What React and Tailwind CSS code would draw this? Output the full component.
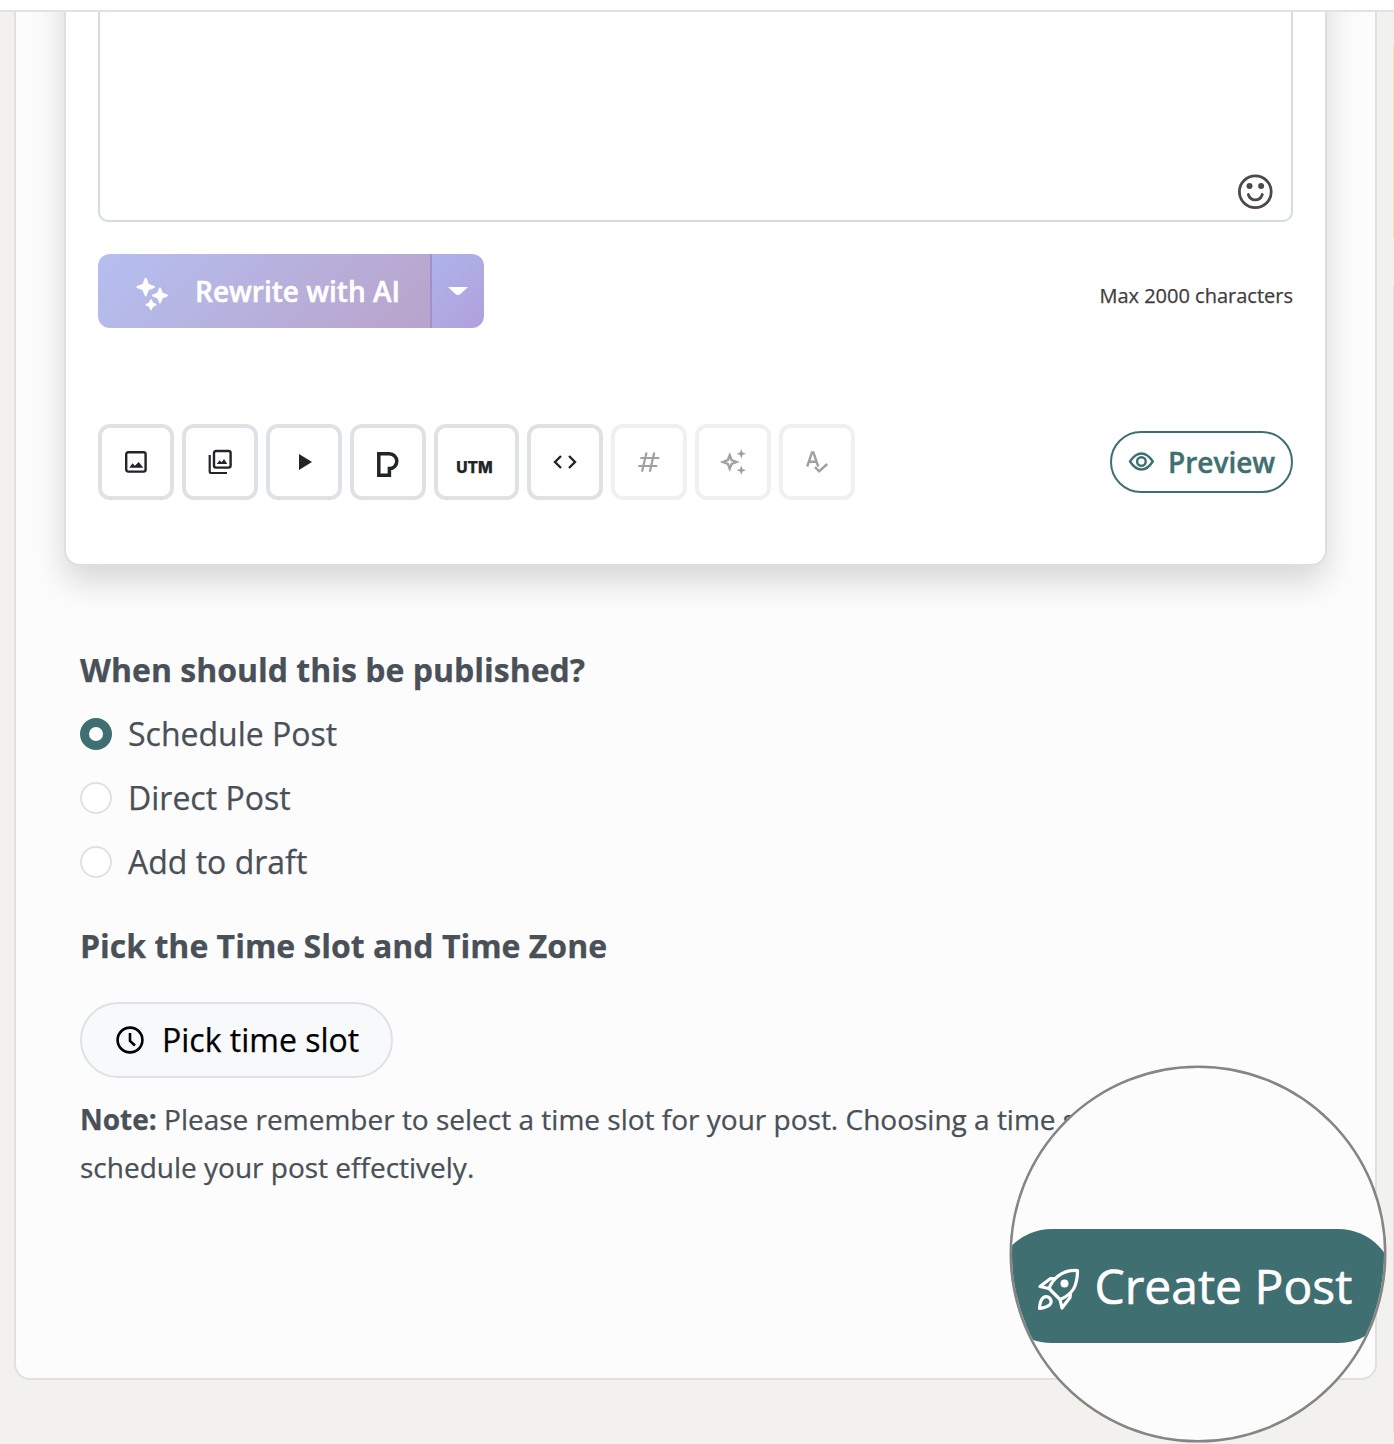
import { useState } from 'react'

const star = (cx, cy, r) => {
  const k = r * 0.28
  return `M${cx} ${cy - r}L${cx + k} ${cy - k}L${cx + r} ${cy}L${cx + k} ${cy + k}L${cx} ${cy + r}L${cx - k} ${cy + k}L${cx - r} ${cy}L${cx - k} ${cy - k}Z`
}

function Icon({ size = 24, children, className = '' }) {
  return (
    <svg
      width={size}
      height={size}
      viewBox={`0 0 ${size} ${size}`}
      fill="none"
      stroke="currentColor"
      strokeWidth="2.2"
      className={`shrink-0 overflow-visible ${className}`}
    >
      {children}
    </svg>
  )
}

const tools = [
  {
    name: 'Image',
    icon: (
      <Icon>
        <rect x="2.2" y="2.2" width="19.4" height="19.4" rx="2" strokeWidth="2.4" />
        <path d="M5.3 17.8l3.2-4.6 2.4 2.6L14.7 12l4.6 5.8z" fill="currentColor" stroke="none" />
      </Icon>
    ),
  },
  {
    name: 'Gallery',
    icon: (
      <Icon>
        <rect x="6" y="1" width="16.6" height="16.6" rx="2" strokeWidth="2.4" />
        <path d="M8.7 14l3-3.8 2 2L16 9l3.3 5z" fill="currentColor" stroke="none" />
        <path d="M1.7 5v17q0 1 1 1h16.3" />
      </Icon>
    ),
  },
  {
    name: 'Video',
    icon: (
      <Icon>
        <path d="M7 4l13 8-13 8z" fill="currentColor" stroke="none" />
      </Icon>
    ),
  },
  {
    name: 'Pixel',
    icon: (
      <Icon>
        <path d="M2.8 3.8h10.6a7.4 7.4 0 0 1 0 14.8v6.6H2.8z" strokeWidth="3.5" />
      </Icon>
    ),
  },
  { name: 'UTM', text: true },
  {
    name: 'Code',
    icon: (
      <Icon>
        <path d="M8 6l-6 6 6 6M16 6l6 6-6 6" strokeWidth="2.4" />
      </Icon>
    ),
  },
  {
    name: 'Hashtags',
    disabled: true,
    icon: (
      <Icon>
        <path d="M3.3 8h19M1.3 16h19M9.5 2.5L5 21.7M17.3 2.5L12.8 21.7" />
      </Icon>
    ),
  },
  {
    name: 'Generate',
    disabled: true,
    icon: (
      <Icon>
        <path d={star(8.7, 12, 6.8)} strokeWidth="2.4" />
        <path d={`${star(20.3, 3.7, 4.7)}${star(20.3, 20.3, 4.7)}`} fill="currentColor" stroke="none" />
      </Icon>
    ),
  },
  {
    name: 'Spelling',
    disabled: true,
    icon: (
      <Icon>
        <path d="M2.2 16.5L7 2.4h1.4L13.2 16.5M4 11.8h7.6M10 17.2l4.2 4.2 8-7.4" strokeWidth="2.4" />
      </Icon>
    ),
  },
]

function ToolButton({ tool }) {
  return (
    <button
      aria-label={tool.name}
      disabled={tool.disabled}
      className={`flex h-[76px] items-center justify-center rounded-xl border-4 ${tool.text ? 'w-[85px]' : 'w-[76px]'} ${tool.disabled ? 'border-[#eff0f2] text-[#a0a0a0]' : 'border-[#dee2e6] text-[#212529]'}`}
    >
      {tool.text ? (
        <span className="pt-[11px] pr-1 font-['Inter',sans-serif] text-[15.5px] leading-none font-extrabold">UTM</span>
      ) : (
        tool.icon
      )}
    </button>
  )
}

function Editor() {
  return (
    <div className="-mt-20 h-[634px] w-[1263px] shrink-0 rounded-2xl border-2 border-[#dfdfdf] bg-white px-8 shadow-[0_16px_32px_rgba(0,0,0,0.15)]">
      <div className="flex h-[288px] items-end justify-end rounded-[10px] border-2 border-[#d5dbe5] pr-[18px] pb-[10px]">
        <Icon size={36} className="text-[#4a4a4a]">
          <circle cx="18.3" cy="17.7" r="15.9" strokeWidth="2.8" />
          <circle cx="12.5" cy="12" r="3" fill="currentColor" stroke="none" />
          <circle cx="24.1" cy="12" r="3" fill="currentColor" stroke="none" />
          <path d="M11.3 20.5c1.2 3.8 3.8 5.4 7 5.4s5.8-1.6 7-5.4" strokeWidth="2.8" strokeLinecap="round" />
        </Icon>
      </div>

      <div className="mt-8 flex items-start justify-between">
        <div className="flex h-[74px] overflow-hidden rounded-xl text-white">
          <button className="flex w-[332px] items-center bg-linear-135 from-[#b4bff1] to-[#b9a3ca] pl-[37px] text-[28px] font-semibold [-webkit-text-stroke:0.5px]">
            <Icon size={36}>
              <path
                d={`${star(10.7, 14, 8.3)}${star(25, 22.5, 7)}${star(16, 31.7, 4.5)}`}
                fill="currentColor"
                strokeWidth="2"
                strokeLinejoin="round"
              />
            </Icon>
            <span className="ml-6">Rewrite with AI</span>
          </button>
          <button
            aria-label="More rewrite options"
            className="flex w-[54px] items-center justify-center border-l-2 border-[#a18fd0] bg-linear-135 from-[#acb4ea] to-[#b1a0db]"
          >
            <Icon size={20}>
              <path d="M0 6h20l-7.5 7q-2.5 1.8-5 0z" fill="currentColor" stroke="none" />
            </Icon>
          </button>
        </div>
        <span className="mt-[27px] text-[20px] leading-[30px] text-[#3d3d3d]">Max 2000 characters</span>
      </div>

      <div className="mt-24 flex items-center justify-between">
        <div className="flex gap-2">
          {tools.map(t => (
            <ToolButton key={t.name} tool={t} />
          ))}
        </div>
        <button className="flex h-[62px] w-[183px] items-center rounded-full border-2 border-[#3f6f70] pl-4 text-[28px] font-semibold text-[#3f6f70] [-webkit-text-stroke:0.4px]">
          <Icon size={26}>
            <path
              d="M2 12.5Q7.3 4.5 13.4 4.5T24.8 12.5Q19.5 20.5 13.4 20.5T2 12.5z"
              strokeWidth="2.4"
              strokeLinejoin="round"
            />
            <circle cx="13.4" cy="12.5" r="4.3" strokeWidth="2.4" />
          </Icon>
          <span className="ml-[14px]">Preview</span>
        </button>
      </div>
    </div>
  )
}

function PublishOptions() {
  const [selected, setSelected] = useState('Schedule Post')

  return (
    <div className="mt-20 pl-4 text-[32px] leading-[48px] text-[#495057]">
      <h2 className="font-bold">When should this be published?</h2>
      <div className="mt-4 flex flex-col gap-4">
        {['Schedule Post', 'Direct Post', 'Add to draft'].map(option => (
          <div key={option} className="flex cursor-pointer items-center gap-4" onClick={() => setSelected(option)}>
            <span
              className={`size-8 rounded-full bg-white ${selected === option ? 'border-9 border-[#3f6f70]' : 'border-2 border-[#dee2e6]'}`}
            />
            <span>{option}</span>
          </div>
        ))}
      </div>

      <h2 className="mt-9 font-bold">Pick the Time Slot and Time Zone</h2>
      <button className="mt-8 flex h-[76px] w-[313px] items-center rounded-full border-2 border-[#dee2e6] bg-[#f8f9fb] pl-[34px] text-black">
        <Icon size={28}>
          <circle cx="14" cy="14" r="12.4" strokeWidth="2.6" />
          <path d="M14 7v8l5 4.5" strokeWidth="2.6" />
        </Icon>
        <span className="ml-[18px]">Pick time slot</span>
      </button>
      <p className="mt-[17px] text-[28px] whitespace-nowrap">
        <strong>Note:</strong> Please remember to select a time slot for your post. Choosing a time slot
        <br />
        schedule your post effectively.
      </p>
    </div>
  )
}

// round magnifier over the submit button
function Magnifier() {
  return (
    <div className="absolute top-[1066px] left-[1010px] flex size-[376px] items-center justify-center overflow-hidden rounded-full border-2 border-[#858585] bg-[#fcfcfc] shadow-[0_0_0_0.5px_#858585]">
      <button className="mt-[63px] mr-[7px] flex h-[114px] w-[400px] shrink-0 items-center rounded-full bg-[#3f6f70] pl-[43px] text-[48px] text-white [-webkit-text-stroke:0.6px]">
        <Icon size={42} className="mt-2">
          <g strokeWidth="3.2" strokeLinejoin="round">
            <path d="M39.5 1.5Q27 1 19.5 7.5Q14 12 11 19.5L22 30.5Q31 27 35.5 20Q39.5 13 39.5 1.5z" />
            <path d="M18 9.5L12.5 9.5L2 17.5L11 19.5M22 30.5L24 39L32 28.5L32.5 24" />
            <path d="M1.5 39.5Q2 31 5.5 28.5Q9 26.5 12 29.5Q14.5 33 11.500 36Q8.500 38.500 1.500 39.500z" />
          </g>
          <circle cx="26.5" cy="14.5" r="4" fill="currentColor" stroke="none" />
        </Icon>
        <span className="ml-[15px]">Create Post</span>
      </button>
    </div>
  )
}

export default function App() {
  return (
    <div className="relative flex h-[1444px] w-[1394px] flex-col overflow-hidden bg-[#f2f1ed] font-['Open_Sans','Noto_Sans',sans-serif] [-webkit-text-stroke:0.25px]">
      <header className="h-3 shrink-0 border-b-2 border-[#e0e2e0] bg-white" />
      <div className="flex min-h-0 flex-1 justify-between overflow-hidden">
        <main className="ml-[14px] h-[1368px] w-[1363px] rounded-b-2xl border-2 border-t-0 border-[#dfe0e0] bg-[#fcfcfc] pl-12">
          <Editor />
          <PublishOptions />
        </main>
        <aside className="flex w-px flex-col">
          <div className="mt-[33px] h-[193px] bg-[#f6e5a6]" />
          <div className="mt-12 h-[1146px] bg-[#dfdfe3]" />
        </aside>
      </div>
      <Magnifier />
    </div>
  )
}
